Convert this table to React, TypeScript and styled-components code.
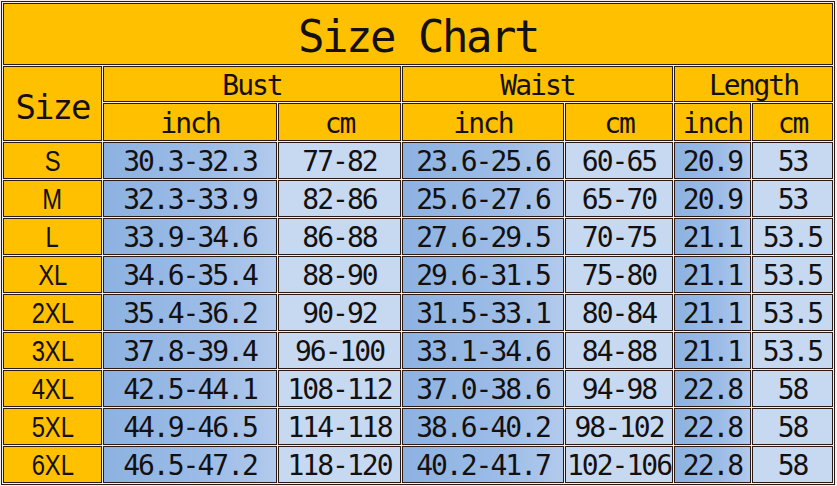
import styled, { createGlobalStyle } from 'styled-components'

const GlobalStyle = createGlobalStyle`
  html, body {
    margin: 0;
    padding: 0;
    background: #f6eeec;
  }
`

const rows = [
  ['S', '30.3-32.3', '77-82', '23.6-25.6', '60-65', '20.9', '53'],
  ['M', '32.3-33.9', '82-86', '25.6-27.6', '65-70', '20.9', '53'],
  ['L', '33.9-34.6', '86-88', '27.6-29.5', '70-75', '21.1', '53.5'],
  ['XL', '34.6-35.4', '88-90', '29.6-31.5', '75-80', '21.1', '53.5'],
  ['2XL', '35.4-36.2', '90-92', '31.5-33.1', '80-84', '21.1', '53.5'],
  ['3XL', '37.8-39.4', '96-100', '33.1-34.6', '84-88', '21.1', '53.5'],
  ['4XL', '42.5-44.1', '108-112', '37.0-38.6', '94-98', '22.8', '58'],
  ['5XL', '44.9-46.5', '114-118', '38.6-40.2', '98-102', '22.8', '58'],
  ['6XL', '46.5-47.2', '118-120', '40.2-41.7', '102-106', '22.8', '58'],
]

const Page = styled.div`
  padding: 1px;
`

const Chart = styled.div`
  display: grid;
  grid-template-columns: 99px 174px 123px 162px 108px 77px 81px;
  grid-template-rows: 62px 36px 38px repeat(9, 37px);
  gap: 1px;
  padding: 1px;
  width: max-content;
  border: 1px solid #2b1b17;
  background: #f6eeec;
`

const Cell = styled.div<{ $cols?: number; $rows?: number }>`
  box-sizing: border-box;
  border: 1px solid #2b1b17;
  display: flex;
  align-items: center;
  justify-content: center;
  padding-top: 2px;
  color: #141010;
  font-family: 'DejaVu Sans Mono', monospace;
  font-size: 28px;
  letter-spacing: -2px;
  white-space: nowrap;
  grid-column: span ${(p) => p.$cols ?? 1};
  grid-row: span ${(p) => p.$rows ?? 1};
`

const Yellow = styled(Cell)`
  background: #ffc000;
`

const Title = styled(Yellow)`
  font-size: 44px;
  letter-spacing: -2.5px;
  padding-top: 4px;
`

const SizeHead = styled(Yellow)`
  font-size: 34px;
  letter-spacing: -2px;
  padding-top: 6px;
`

const Label = styled.span`
  display: inline-block;
  font-family: 'Liberation Sans', Arial, sans-serif;
  font-size: 29px;
  letter-spacing: 0;
  transform: scaleX(0.82);
`

const Inch = styled(Cell)`
  background: linear-gradient(90deg, #8db2e1 0%, #9cbce7 60%, #b2caec 100%);
`

const Cm = styled(Cell)`
  background: #c6d9f0;
`

export default function App() {
  return (
    <Page>
      <GlobalStyle />
      <Chart>
        <Title $cols={7}>Size Chart</Title>
        <SizeHead $rows={2}>Size</SizeHead>
        <Yellow $cols={2}>Bust</Yellow>
        <Yellow $cols={2}>Waist</Yellow>
        <Yellow $cols={2}>Length</Yellow>
        <Yellow>inch</Yellow>
        <Yellow>cm</Yellow>
        <Yellow>inch</Yellow>
        <Yellow>cm</Yellow>
        <Yellow>inch</Yellow>
        <Yellow>cm</Yellow>
        {rows.map(([size, bi, bc, wi, wc, li, lc]) => (
          <Row key={size} size={size} values={[bi, bc, wi, wc, li, lc]} />
        ))}
      </Chart>
    </Page>
  )
}

function Row({ size, values }: { size: string; values: string[] }) {
  return (
    <>
      <Yellow>
        <Label>{size}</Label>
      </Yellow>
      {values.map((v, i) =>
        i % 2 === 0 ? <Inch key={i}>{v}</Inch> : <Cm key={i}>{v}</Cm>
      )}
    </>
  )
}
